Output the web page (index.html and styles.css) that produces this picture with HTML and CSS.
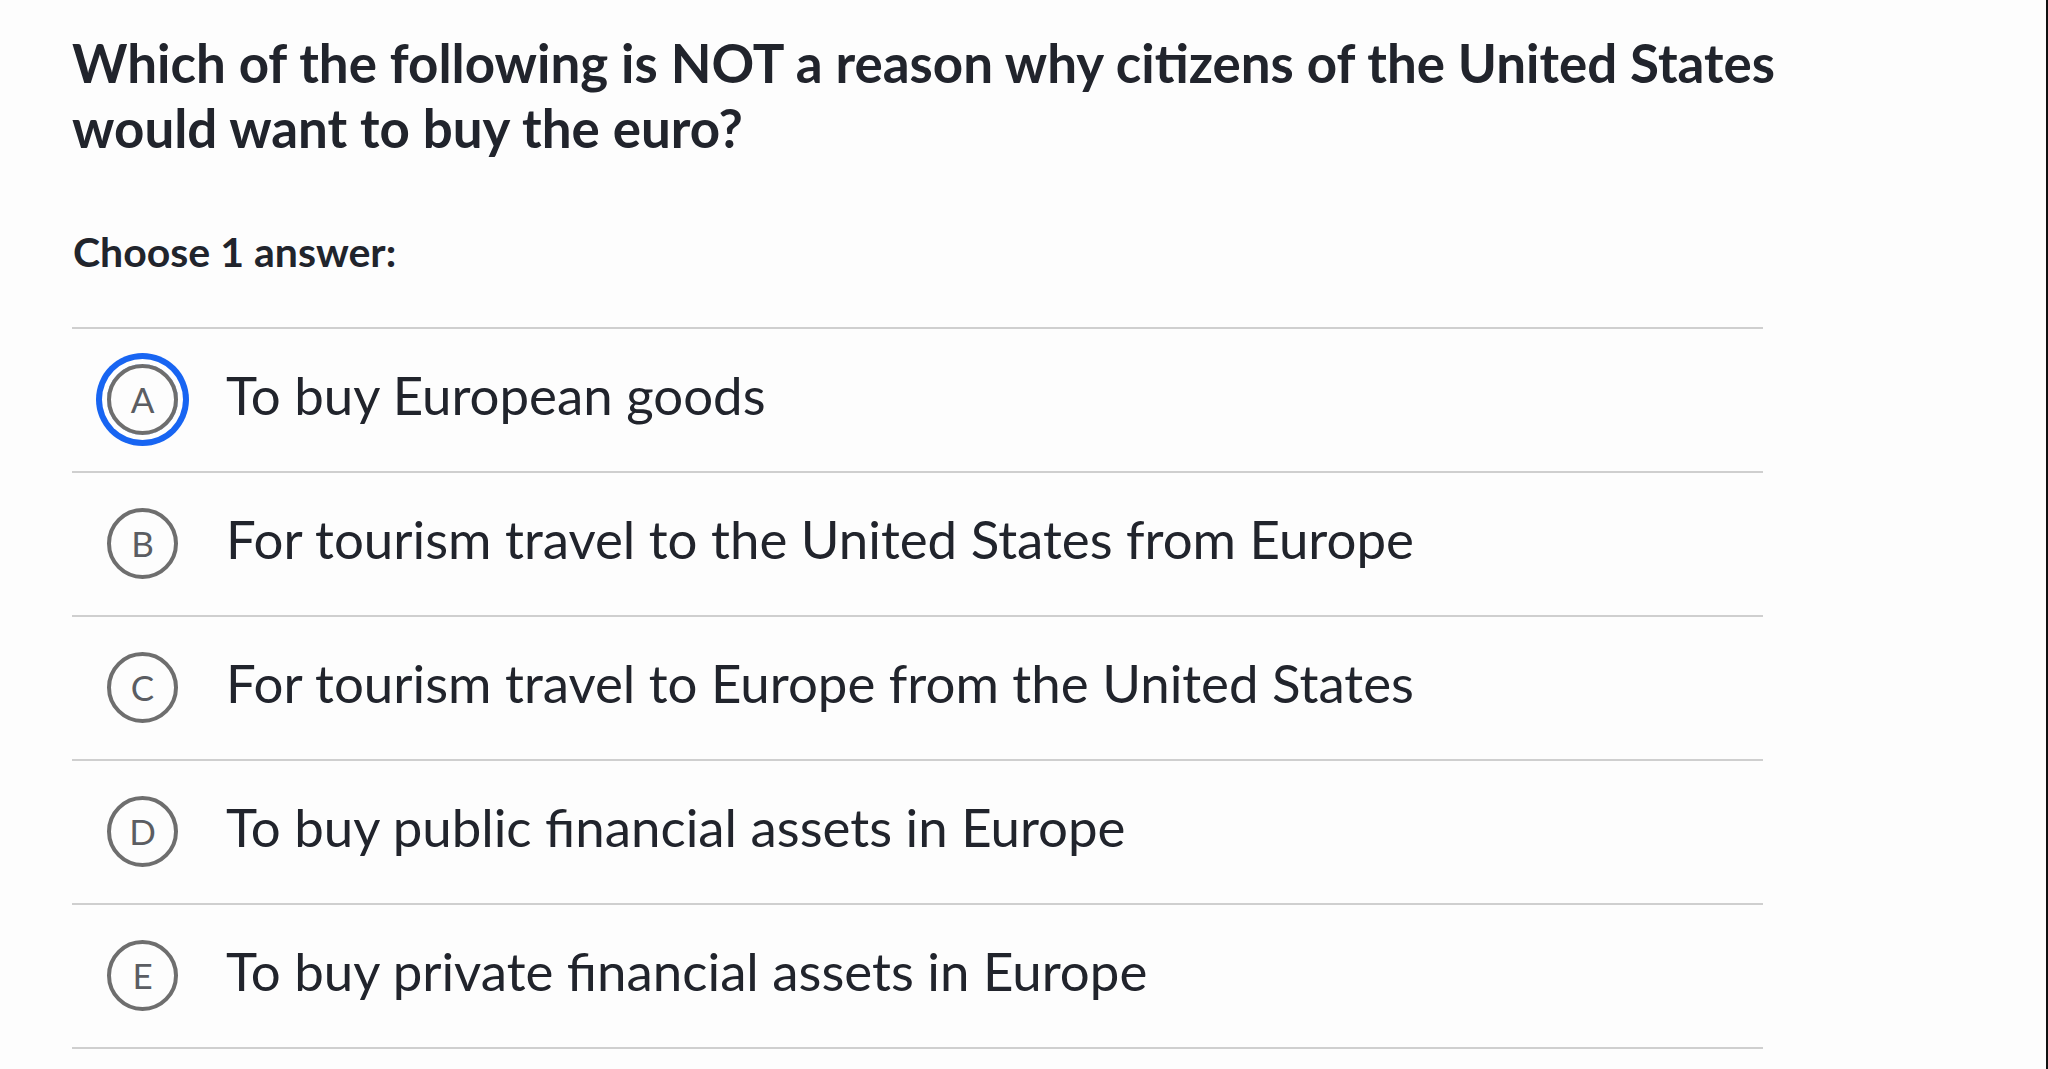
FILE: index.html
```html
<!DOCTYPE html>
<html lang="en">
<head>
<meta charset="utf-8">
<title>Question</title>
<link rel="stylesheet" href="styles.css">
</head>
<body>
<div class="page">
  <div class="content">
    <h1 class="question">Which of the following is NOT a reason why citizens of the United States would want to buy the euro?</h1>
    <p class="prompt">Choose 1 answer:</p>
    <ul class="choices">
      <li class="choice">
        <span class="badge is-focused">A</span>
        <span class="label">To buy European goods</span>
      </li>
      <li class="choice">
        <span class="badge">B</span>
        <span class="label">For tourism travel to the United States from Europe</span>
      </li>
      <li class="choice">
        <span class="badge">C</span>
        <span class="label">For tourism travel to Europe from the United States</span>
      </li>
      <li class="choice">
        <span class="badge">D</span>
        <span class="label">To buy public financial assets in Europe</span>
      </li>
      <li class="choice">
        <span class="badge">E</span>
        <span class="label">To buy private financial assets in Europe</span>
      </li>
    </ul>
  </div>
</div>
</body>
</html>
```

FILE: styles.css
```css
html, body {
  margin: 0;
  padding: 0;
  background: #fdfdfd;
}

.page {
  min-height: 1069px;
  box-sizing: border-box;
  border-right: 2px solid #111;
  font-family: Lato, "Open Sans", sans-serif;
  color: #21242c;
}

.content {
  width: 1691px;
  padding: 30px 0 0 72px;
}

.question {
  margin: 0;
  width: 1720px;
  font-size: 52.9px;
  line-height: 65px;
  font-weight: 700;
}

.prompt {
  margin: 68px 0 0 1px;
  font-size: 41px;
  line-height: 48px;
  font-weight: 700;
}

.choices {
  list-style: none;
  margin: 51px 0 0 0;
  padding: 0;
  border-bottom: 2px solid #cfcfcf;
}

.choice {
  display: flex;
  align-items: center;
  height: 142px;
  border-top: 2px solid #cfcfcf;
  padding-left: 35px;
}

.badge {
  flex: none;
  width: 71px;
  height: 71px;
  box-sizing: border-box;
  border: 4.5px solid #6e6e6e;
  border-radius: 50%;
  display: flex;
  align-items: center;
  justify-content: center;
  font-size: 35px;
  color: #5b5d62;
  margin-right: 48px;
  margin-bottom: 2px;
}

.badge.is-focused {
  box-shadow: 0 0 0 5px #ffffff, 0 0 0 11px #1865f2;
}

.label {
  font-size: 52.8px;
  line-height: 64px;
  font-weight: 400;
  margin-bottom: 10px;
}
```
